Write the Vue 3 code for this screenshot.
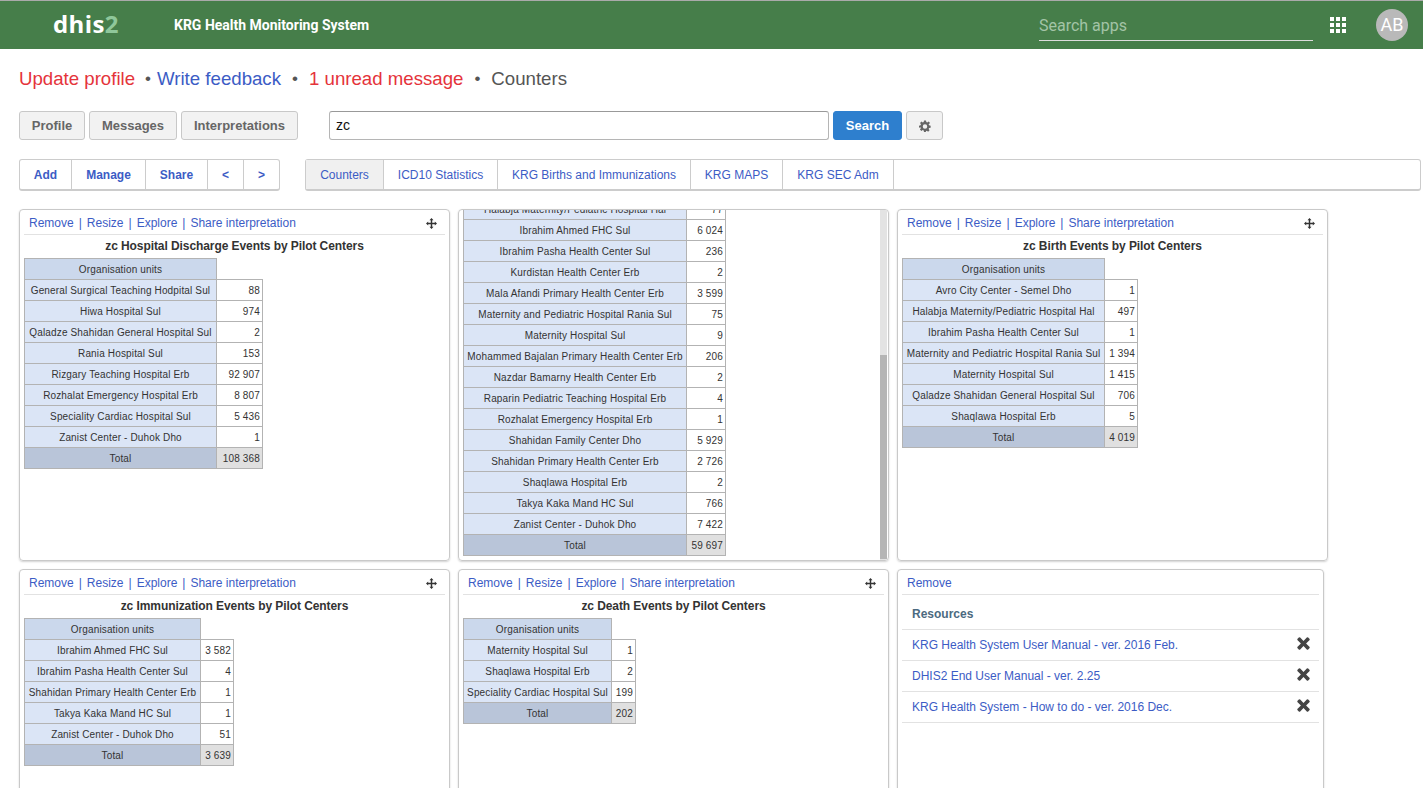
<template>
  <div class="page">
    <header class="topbar">
      <div class="logo">dhis<span>2</span></div>
      <div class="system-name">KRG Health Monitoring System</div>
      <div class="app-search">Search apps</div>
      <div class="apps-grid">
        <i v-for="n in 9" :key="n"></i>
      </div>
      <div class="avatar">AB</div>
    </header>

    <div class="notice-line">
      <a class="red">Update profile</a>
      <span class="dot first">•</span>
      <a class="blue">Write feedback</a>
      <span class="dot">•</span>
      <a class="red">1 unread message</a>
      <span class="dot">•</span>
      <span class="current">Counters</span>
    </div>

    <div class="search-row">
      <button type="button" class="gray-btn w-profile">Profile</button>
      <button type="button" class="gray-btn w-messages">Messages</button>
      <button type="button" class="gray-btn w-interp">Interpretations</button>
      <div class="search-input">zc</div>
      <button type="button" class="search-btn">Search</button>
      <button type="button" class="gray-btn cog-btn">
        <svg width="12" height="12" viewBox="0 0 24 24">
          <path
            fill="#666"
            fill-rule="evenodd"
            d="M10 1h4l.6 3.2 2 .8 2.700-1.800 2.800 2.800L19.300 8.700l.8 2 3.200.6v4l-3.200.6-.8 2 1.800 2.700-2.800 2.800-2.700-1.800-2 .8L14 24h-4l-.6-3.100-2-.8-2.700 1.800-2.800-2.800 1.800-2.700-.8-2L0 15.300v-4l3.100-.6.8-2L2.100 6 4.900 3.200 7.600 5l1.800-.8zM12 8.500a4.500 4.500 0 1 0 0 9 4.500 4.500 0 0 0 0-9z"
          />
        </svg>
      </button>
    </div>

    <div class="nav-row">
      <div class="action-group">
        <a v-for="item in actions" :key="item.label" :style="{ width: item.width + 'px' }">{{ item.label }}</a>
      </div>
      <div class="tabs">
        <a
          v-for="(tab, i) in tabs"
          :key="tab.label"
          :class="{ active: i === 0 }"
          :style="{ width: tab.width + 'px' }"
        >{{ tab.label }}</a>
      </div>
    </div>

    <div class="dashboard">
      <section v-for="card in cards" :key="card.id" class="card">
        <div v-if="card.scrolled" class="scroll-body">
          <table class="pivot" :style="{ width: card.orgW + card.numW + 'px' }">
            <colgroup>
              <col :style="{ width: card.orgW + 'px' }" />
              <col :style="{ width: card.numW + 'px' }" />
            </colgroup>
            <tbody>
              <tr v-for="row in card.rows" :key="row[0]">
                <td class="org">{{ row[0] }}</td>
                <td class="num">{{ row[1] }}</td>
              </tr>
              <tr>
                <td class="total-label">Total</td>
                <td class="total-num">{{ card.total }}</td>
              </tr>
            </tbody>
          </table>
        </div>
        <div v-if="card.scrolled" class="scrollbar"><div class="thumb"></div></div>

        <template v-if="!card.scrolled">
          <div class="card-links">
            <a>Remove</a><b>|</b><a>Resize</a><b>|</b><a>Explore</a><b>|</b><a>Share interpretation</a>
            <svg class="move" width="11" height="11" viewBox="0 0 12 12">
              <path
                fill="#333"
                d="M6 0l2.200 2.400H6.800v2.800h2.800V3.800L12 6 9.600 8.200V6.800H6.800v2.800h1.400L6 12 3.800 9.600h1.400V6.800H2.400v1.400L0 6l2.400-2.200v1.400h2.800V2.400H3.800z"
              />
            </svg>
          </div>
          <h4>{{ card.title }}</h4>
          <table class="pivot" :style="{ width: card.orgW + card.numW + 'px' }">
            <colgroup>
              <col :style="{ width: card.orgW + 'px' }" />
              <col :style="{ width: card.numW + 'px' }" />
            </colgroup>
            <tbody>
              <tr>
                <td class="head">Organisation units</td>
              </tr>
              <tr v-for="row in card.rows" :key="row[0]">
                <td class="org">{{ row[0] }}</td>
                <td class="num">{{ row[1] }}</td>
              </tr>
              <tr>
                <td class="total-label">Total</td>
                <td class="total-num">{{ card.total }}</td>
              </tr>
            </tbody>
          </table>
        </template>
      </section>

      <section class="card resources">
        <div class="card-links"><a>Remove</a></div>
        <div class="res-title">Resources</div>
        <div v-for="item in resources" :key="item" class="res-row">
          <a>{{ item }}</a>
          <svg width="13" height="13" viewBox="0 0 13 13">
            <path fill="#444" d="M3.200.6L6.500 3.900 9.800.6a1 1 0 0 1 1.400 0l1.200 1.200a1 1 0 0 1 0 1.400L9.100 6.500l3.300 3.300a1 1 0 0 1 0 1.400l-1.200 1.200a1 1 0 0 1-1.400 0L6.500 9.100l-3.300 3.300a1 1 0 0 1-1.400 0L.6 11.200a1 1 0 0 1 0-1.400l3.300-3.300L.6 3.200a1 1 0 0 1 0-1.400L1.800.6a1 1 0 0 1 1.400 0z" />
          </svg>
        </div>
      </section>
    </div>
  </div>
</template>

<script setup>
const actions = [
  { label: 'Add', width: 53 },
  { label: 'Manage', width: 74 },
  { label: 'Share', width: 62 },
  { label: '<', width: 36 },
  { label: '>', width: 36 }
]

const tabs = [
  { label: 'Counters', width: 79 },
  { label: 'ICD10 Statistics', width: 114 },
  { label: 'KRG Births and Immunizations', width: 193 },
  { label: 'KRG MAPS', width: 92 },
  { label: 'KRG SEC Adm', width: 111 }
]

const cards = [
  {
    id: 1,
    orgW: 192,
    numW: 46,
    title: 'zc Hospital Discharge Events by Pilot Centers',
    total: '108 368',
    rows: [
      ['General Surgical Teaching Hodpital Sul', '88'],
      ['Hiwa Hospital Sul', '974'],
      ['Qaladze Shahidan General Hospital Sul', '2'],
      ['Rania Hospital Sul', '153'],
      ['Rizgary Teaching Hospital Erb', '92 907'],
      ['Rozhalat Emergency Hospital Erb', '8 807'],
      ['Speciality Cardiac Hospital Sul', '5 436'],
      ['Zanist Center - Duhok Dho', '1']
    ]
  },
  {
    id: 2,
    scrolled: true,
    orgW: 223,
    numW: 39,
    total: '59 697',
    rows: [
      ['Halabja Maternity/Pediatric Hospital Hal', '77'],
      ['Ibrahim Ahmed FHC Sul', '6 024'],
      ['Ibrahim Pasha Health Center Sul', '236'],
      ['Kurdistan Health Center Erb', '2'],
      ['Mala Afandi Primary Health Center Erb', '3 599'],
      ['Maternity and Pediatric Hospital Rania Sul', '75'],
      ['Maternity Hospital Sul', '9'],
      ['Mohammed Bajalan Primary Health Center Erb', '206'],
      ['Nazdar Bamarny Health Center Erb', '2'],
      ['Raparin Pediatric Teaching Hospital Erb', '4'],
      ['Rozhalat Emergency Hospital Erb', '1'],
      ['Shahidan Family Center Dho', '5 929'],
      ['Shahidan Primary Health Center Erb', '2 726'],
      ['Shaqlawa Hospital Erb', '2'],
      ['Takya Kaka Mand HC Sul', '766'],
      ['Zanist Center - Duhok Dho', '7 422']
    ]
  },
  {
    id: 3,
    orgW: 202,
    numW: 33,
    title: 'zc Birth Events by Pilot Centers',
    total: '4 019',
    rows: [
      ['Avro City Center - Semel Dho', '1'],
      ['Halabja Maternity/Pediatric Hospital Hal', '497'],
      ['Ibrahim Pasha Health Center Sul', '1'],
      ['Maternity and Pediatric Hospital Rania Sul', '1 394'],
      ['Maternity Hospital Sul', '1 415'],
      ['Qaladze Shahidan General Hospital Sul', '706'],
      ['Shaqlawa Hospital Erb', '5']
    ]
  },
  {
    id: 4,
    orgW: 176,
    numW: 33,
    title: 'zc Immunization Events by Pilot Centers',
    total: '3 639',
    rows: [
      ['Ibrahim Ahmed FHC Sul', '3 582'],
      ['Ibrahim Pasha Health Center Sul', '4'],
      ['Shahidan Primary Health Center Erb', '1'],
      ['Takya Kaka Mand HC Sul', '1'],
      ['Zanist Center - Duhok Dho', '51']
    ]
  },
  {
    id: 5,
    orgW: 148,
    numW: 24,
    title: 'zc Death Events by Pilot Centers',
    total: '202',
    rows: [
      ['Maternity Hospital Sul', '1'],
      ['Shaqlawa Hospital Erb', '2'],
      ['Speciality Cardiac Hospital Sul', '199']
    ]
  }
]

const resources = [
  'KRG Health System User Manual - ver. 2016 Feb.',
  'DHIS2 End User Manual - ver. 2.25',
  'KRG Health System - How to do - ver. 2016 Dec.'
]
</script>

<style>
html,
body {
  margin: 0;
  overflow: hidden;
  background: #fff;
}
</style>

<style scoped>
.page {
  height: 788px;
  overflow: hidden;
  font-family: "Liberation Sans", Arial, sans-serif;
  color: #333;
}

.topbar {
  height: 48px;
  border-top: 1px solid #aaa;
  background: #467e4a;
  display: flex;
  align-items: center;
  color: #fff;
}

.logo {
  margin-left: 53px;
  width: 121px;
  font-family: "Open Sans", sans-serif;
  font-size: 24px;
  font-weight: 700;
  letter-spacing: 0.4px;
  margin-top: -4px;
}

.logo span {
  color: #8fc79a;
}

.system-name {
  width: 865px;
  font-family: Roboto, sans-serif;
  font-size: 14px;
  font-weight: 700;
}

.app-search {
  width: 274px;
  height: 32px;
  line-height: 36px;
  border-bottom: 1px solid #ddd;
  font-family: Roboto, sans-serif;
  font-size: 16px;
  color: #a3c4a6;
  margin-top: -1px;
}

.apps-grid {
  margin-left: 17px;
  width: 16px;
  display: grid;
  grid-template-columns: repeat(3, 4px);
  grid-auto-rows: 4px;
  gap: 2px;
}

.apps-grid i {
  background: #fff;
}

.avatar {
  margin-left: 30px;
  width: 32px;
  height: 32px;
  border-radius: 50%;
  background: #b9b9b9;
  color: #fff;
  font-family: Roboto, sans-serif;
  font-size: 18px;
  line-height: 32px;
  text-align: center;
}

.notice-line {
  height: 24px;
  margin: 18px 0 0 19px;
  display: flex;
  align-items: center;
  font-size: 18.65px;
  white-space: pre;
}

.red {
  color: #e5333b;
}

.blue {
  color: #3c5cc5;
}

.dot {
  margin: 0 11px;
  color: #555;
  font-size: 17px;
}

.dot.first {
  margin: 0 6px 0 10px;
}

.current {
  color: #555;
}

.search-row {
  margin: 20px 0 0 19px;
  height: 29px;
  display: flex;
}

.gray-btn {
  height: 29px;
  margin-right: 4px;
  padding: 0;
  border: 1px solid #c8c8c8;
  border-radius: 3px;
  background: #f2f2f2;
  color: #666;
  font: 700 13px "Liberation Sans", Arial, sans-serif;
}

.w-profile {
  width: 66px;
}

.w-messages {
  width: 88px;
}

.w-interp {
  width: 117px;
}

.search-input {
  width: 486px;
  height: 27px;
  margin-left: 27px;
  padding: 0 6px;
  border: 1px solid #b5b5b5;
  border-top-color: #999;
  border-radius: 3px;
  line-height: 27px;
  font-size: 14px;
  color: #111;
}

.search-btn {
  width: 69px;
  height: 29px;
  margin: 0 4px;
  border: 1px solid #2e7fce;
  border-radius: 3px;
  background: #2e7fce;
  color: #fff;
  font: 700 13px "Liberation Sans", Arial, sans-serif;
}

.cog-btn {
  width: 37px;
  margin: 0;
  display: flex;
  align-items: center;
  justify-content: center;
}

.nav-row {
  margin: 19px 0 0 19px;
  display: flex;
  gap: 25px;
}

.action-group,
.tabs {
  height: 29px;
  display: flex;
  border: 1px solid #ccc;
  border-bottom-width: 2px;
  border-radius: 3px;
}

.action-group {
  width: 259px;
}

.tabs {
  width: 1114px;
}

.action-group a,
.tabs a {
  box-sizing: border-box;
  border-right: 1px solid #ccc;
  text-align: center;
  line-height: 30px;
  font-size: 12px;
  color: #3c5cc5;
}

.action-group a {
  font-weight: 700;
}

.action-group a:first-child {
  width: 52px !important;
}

.action-group a:last-child {
  width: 35px !important;
  border-right: 0;
}

.tabs a:first-child {
  width: 78px !important;
}

.tabs a.active {
  background: #f0f0f0;
}

.dashboard {
  margin: 18px 0 0 19px;
  display: grid;
  grid-template-columns: 439px 439px 431px;
  grid-template-rows: 352px 352px;
  row-gap: 8px;
}

.card {
  position: relative;
  box-sizing: border-box;
  width: 431px;
  overflow: hidden;
  padding: 0 4px;
  border: 1px solid #c9c9c9;
  border-radius: 4px;
  box-shadow: 0 1px 2px rgba(0, 0, 0, 0.18);
}

.card-links {
  height: 22px;
  padding: 2px 0 0 5px;
  display: flex;
  align-items: center;
  border-bottom: 1px solid #e2e2e2;
  font-size: 12px;
  color: #3c5cc5;
}

.card-links b {
  margin: 0 5px;
  font-weight: 400;
  font-size: 12px;
}

.move {
  margin-left: auto;
  margin-right: 8px;
}

h4 {
  height: 23px;
  margin: 0;
  line-height: 22px;
  text-align: center;
  font-size: 12px;
  font-weight: 700;
  letter-spacing: -0.08px;
  color: #333;
}

.pivot {
  border-collapse: collapse;
  table-layout: fixed;
  font-size: 10px;
  letter-spacing: 0.15px;
  color: #333;
}

.pivot td {
  box-sizing: border-box;
  height: 21px;
  padding: 0 2px 0 0;
  border: 1px solid #b3b3b3;
  white-space: nowrap;
}

.pivot td.org,
.pivot td.head,
.pivot td.total-label {
  padding: 0;
}

.head {
  background: #cbd8ec;
  text-align: center;
}

.org {
  background: #dbe5f6;
  text-align: center;
}

.num {
  background: #fff;
  text-align: right;
}

.total-label {
  background: #b9c5d9;
  text-align: center;
}

.total-num {
  background: #e0e0e0;
  text-align: right;
}

.scroll-body {
  height: 346px;
  padding-bottom: 4px;
  display: flex;
  flex-direction: column;
  align-items: flex-start;
  justify-content: flex-end;
  overflow: hidden;
}

.scroll-body .pivot {
  flex-shrink: 0;
}

.scrollbar {
  position: absolute;
  top: 0;
  right: 1px;
  bottom: 0;
  width: 7px;
  background: #e3e3e3;
}

.thumb {
  position: absolute;
  left: 0;
  right: 0;
  top: 145px;
  bottom: 1px;
  background: #b5b5b5;
}

.card.resources {
  width: 427px;
}

.res-title {
  height: 34px;
  padding-left: 10px;
  border-bottom: 1px solid #e2e2e2;
  line-height: 38px;
  font-size: 12px;
  font-weight: 700;
  color: #4c6a80;
}

.res-row {
  height: 30px;
  padding: 0 9px 0 10px;
  display: flex;
  align-items: center;
  justify-content: space-between;
  border-bottom: 1px solid #e2e2e2;
  font-size: 12px;
  color: #3c5cc5;
}

.res-row svg {
  margin-top: -3px;
}
</style>
